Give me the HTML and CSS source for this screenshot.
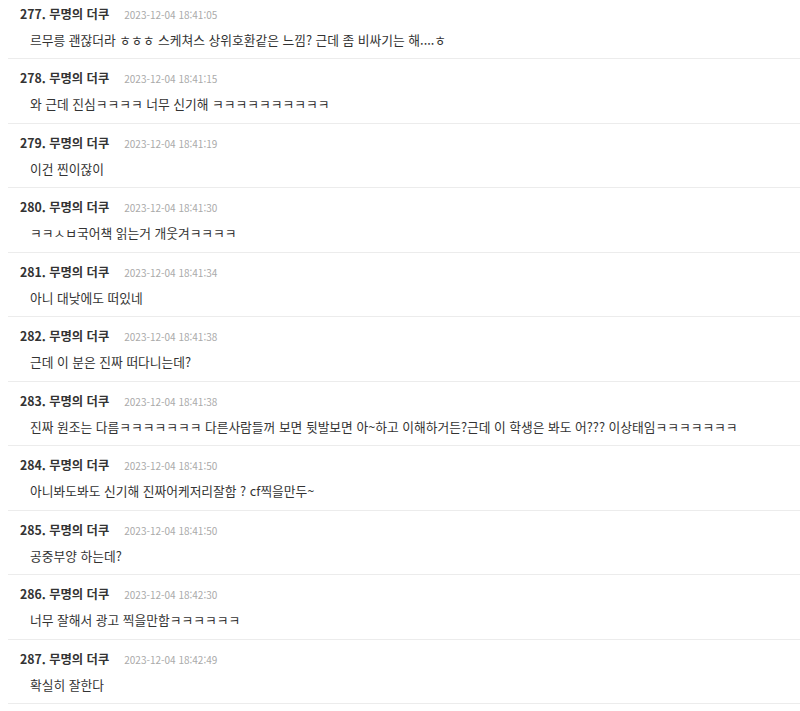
FILE: index.html
```html
<!DOCTYPE html>
<html lang="ko">
<head>
<meta charset="utf-8">
<link rel="stylesheet" href="styles.css">
</head>
<body>
<ul class="comments">
  <li class="comment">
    <div class="meta"><span class="author">277. 무명의 더쿠</span><span class="date">2023-12-04 18:41:05</span></div>
    <div class="text">르무릉 괜잖더라 ㅎㅎㅎ 스케쳐스 상위호환같은 느낌? 근데 좀 비싸기는 해....ㅎ</div>
  </li>
  <li class="comment">
    <div class="meta"><span class="author">278. 무명의 더쿠</span><span class="date">2023-12-04 18:41:15</span></div>
    <div class="text">와 근데 진심ㅋㅋㅋㅋ 너무 신기해 ㅋㅋㅋㅋㅋㅋㅋㅋㅋㅋ</div>
  </li>
  <li class="comment">
    <div class="meta"><span class="author">279. 무명의 더쿠</span><span class="date">2023-12-04 18:41:19</span></div>
    <div class="text">이건 찐이잖이</div>
  </li>
  <li class="comment">
    <div class="meta"><span class="author">280. 무명의 더쿠</span><span class="date">2023-12-04 18:41:30</span></div>
    <div class="text">ㅋㅋㅅㅂ국어책 읽는거 개웃겨ㅋㅋㅋㅋ</div>
  </li>
  <li class="comment">
    <div class="meta"><span class="author">281. 무명의 더쿠</span><span class="date">2023-12-04 18:41:34</span></div>
    <div class="text">아니 대낮에도 떠있네</div>
  </li>
  <li class="comment">
    <div class="meta"><span class="author">282. 무명의 더쿠</span><span class="date">2023-12-04 18:41:38</span></div>
    <div class="text">근데 이 분은 진짜 떠다니는데?</div>
  </li>
  <li class="comment">
    <div class="meta"><span class="author">283. 무명의 더쿠</span><span class="date">2023-12-04 18:41:38</span></div>
    <div class="text">진짜 원조는 다름ㅋㅋㅋㅋㅋㅋㅋ 다른사람들꺼 보면 뒷발보면 아~하고 이해하거든?근데 이 학생은 봐도 어??? 이상태임ㅋㅋㅋㅋㅋㅋㅋ</div>
  </li>
  <li class="comment">
    <div class="meta"><span class="author">284. 무명의 더쿠</span><span class="date">2023-12-04 18:41:50</span></div>
    <div class="text">아니봐도봐도 신기해 진짜어케저리잘함 ? cf찍을만두~</div>
  </li>
  <li class="comment">
    <div class="meta"><span class="author">285. 무명의 더쿠</span><span class="date">2023-12-04 18:41:50</span></div>
    <div class="text">공중부양 하는데?</div>
  </li>
  <li class="comment">
    <div class="meta"><span class="author">286. 무명의 더쿠</span><span class="date">2023-12-04 18:42:30</span></div>
    <div class="text">너무 잘해서 광고 찍을만함ㅋㅋㅋㅋㅋㅋ</div>
  </li>
  <li class="comment">
    <div class="meta"><span class="author">287. 무명의 더쿠</span><span class="date">2023-12-04 18:42:49</span></div>
    <div class="text">확실히 잘한다</div>
  </li>
</ul>
</body>
</html>
```
FILE: styles.css
```css
html, body {
  margin: 0;
  padding: 0;
  background: #fff;
}
body {
  font-family: "Noto Sans CJK KR", "Noto Sans", sans-serif;
  color: #333;
}
.comments {
  list-style: none;
  margin: 0 0 0 8px;
  padding: 0;
}
.comment {
  padding: 9px 12px 8.5px 12px;
  border-bottom: 1px solid #ececec;
}
.comment:first-child {
  padding-top: 3.5px;
}
.meta {
  display: flex;
  align-items: baseline;
  gap: 15px;
  line-height: 20px;
  height: 20px;
}
.author {
  font-size: 12.3px;
  font-weight: 700;
  color: #333;
}
.date {
  font-size: 10px;
  color: #aaa;
}
.text {
  margin-top: 6px;
  padding-left: 10px;
  font-size: 12.75px;
  line-height: 20px;
  color: #333;
}
```
